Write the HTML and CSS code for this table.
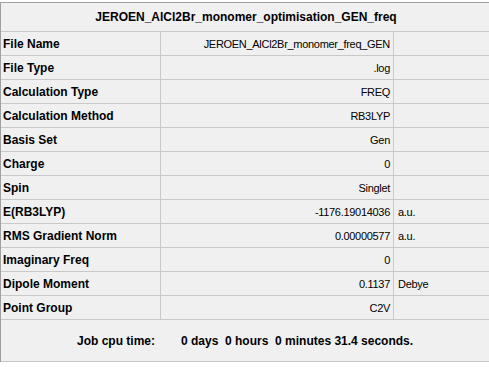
FILE: index.html
```html
<!DOCTYPE html>
<html>
<head>
<meta charset="utf-8">
<link rel="stylesheet" href="styles.css">
</head>
<body>
<div class="panel">
  <div class="title">JEROEN_AlCl2Br_monomer_optimisation_GEN_freq</div>
  <div class="grid">
    <div class="lbl">File Name</div><div class="val">JEROEN_AlCl2Br_monomer_freq_GEN</div><div class="unit"></div>
    <div class="lbl">File Type</div><div class="val">.log</div><div class="unit"></div>
    <div class="lbl">Calculation Type</div><div class="val">FREQ</div><div class="unit"></div>
    <div class="lbl">Calculation Method</div><div class="val">RB3LYP</div><div class="unit"></div>
    <div class="lbl">Basis Set</div><div class="val">Gen</div><div class="unit"></div>
    <div class="lbl">Charge</div><div class="val">0</div><div class="unit"></div>
    <div class="lbl">Spin</div><div class="val">Singlet</div><div class="unit"></div>
    <div class="lbl">E(RB3LYP)</div><div class="val">-1176.19014036</div><div class="unit">a.u.</div>
    <div class="lbl">RMS Gradient Norm</div><div class="val">0.00000577</div><div class="unit">a.u.</div>
    <div class="lbl">Imaginary Freq</div><div class="val">0</div><div class="unit"></div>
    <div class="lbl">Dipole Moment</div><div class="val">0.1137</div><div class="unit">Debye</div>
    <div class="lbl">Point Group</div><div class="val">C2V</div><div class="unit"></div>
  </div>
  <div class="footer">
    <span class="f-label">Job cpu time:</span>
    <span class="f-value">0 days&nbsp;&nbsp;0 hours&nbsp;&nbsp;0 minutes 31.4 seconds.</span>
  </div>
</div>
</body>
</html>
```
FILE: styles.css
```css
html, body {
  margin: 0;
  padding: 0;
  background: #ffffff;
}
body {
  font-family: "Liberation Sans", Arial, sans-serif;
  font-size: 12px;
  color: #000;
}
.panel {
  margin-top: 2px;
  border-top: 1px solid #a0a0a0;
  border-left: 1px solid #a0a0a0;
  background: #f0f0f0;
}
.title {
  height: 28px;
  border-bottom: 1px solid #c8c8c8;
  display: flex;
  align-items: center;
  justify-content: center;
  font-weight: bold;
  padding-left: 2px;
}
.grid {
  display: grid;
  grid-template-columns: 160px 233px 1fr;
  grid-auto-rows: 24px;
}
.grid > div {
  box-sizing: border-box;
  border-bottom: 1px solid #c8c8c8;
  display: flex;
  align-items: center;
  white-space: nowrap;
  overflow: hidden;
}
.lbl {
  font-weight: bold;
  padding-left: 2px;
  border-right: 1px solid #c8c8c8;
}
.val {
  justify-content: flex-end;
  padding-right: 3px;
  border-right: 1px solid #c8c8c8;
  font-size: 11px;
  letter-spacing: -0.3px;
}
.unit {
  padding-left: 4px;
  font-size: 11px;
  letter-spacing: -0.3px;
}
.footer {
  height: 41px;
  border-bottom: 1px solid #c8c8c8;
  display: flex;
  align-items: center;
  padding-left: 76px;
  font-weight: bold;
}
.f-label {
  width: 104px;
}
```
